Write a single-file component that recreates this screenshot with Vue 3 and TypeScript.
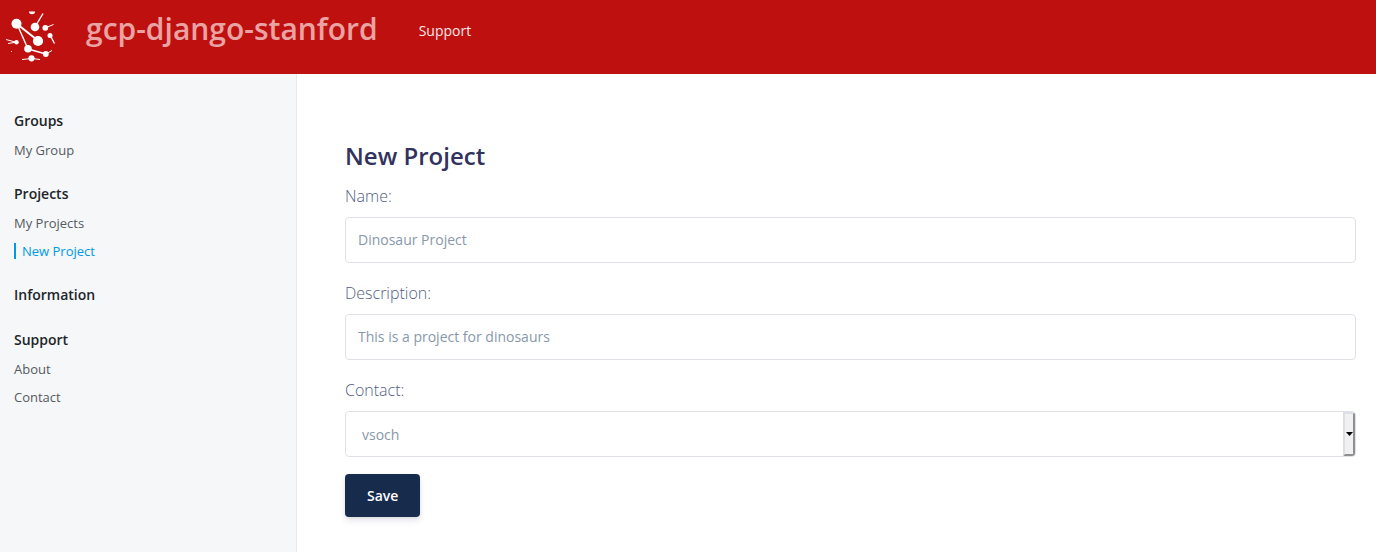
<script setup lang="ts">
import { ref } from 'vue'

interface NavItem {
  label: string
  active?: boolean
}

interface NavGroup {
  title: string
  items: NavItem[]
}

const groups: NavGroup[] = [
  { title: 'Groups', items: [{ label: 'My Group' }] },
  { title: 'Projects', items: [{ label: 'My Projects' }, { label: 'New Project', active: true }] },
  { title: 'Information', items: [] },
  { title: 'Support', items: [{ label: 'About' }, { label: 'Contact' }] },
]

const name = ref('')
const description = ref('')
const contact = ref('vsoch')
</script>

<template>
  <div class="page">
    <header class="topbar">
      <a class="logo" href="#" aria-label="Home">
        <svg width="56" height="56" viewBox="0 0 56 56" fill="#fff" stroke="#fff">
          <g fill="none" stroke-width="1.4">
            <path d="M12 16 33.500 33" stroke-width="2" />
            <path d="M12 16 23 41" />
            <path d="M23 41 41 46" />
            <path d="M30 19 38 5.500" />
            <path d="M40 20 48.500 16.500" stroke-width="1" />
            <path d="M45 27 49.500 35.500" />
            <path d="M12 34.500 1 31.500M12 34 3 35.500" stroke-width="1" />
            <path d="M41 46 47 42.500M17 51.500l10-1 8 1" stroke-width="1" />
          </g>
          <g stroke="none">
            <circle cx="11.500" cy="15.800" r="5" />
            <circle cx="30" cy="19" r="4.300" />
            <circle cx="33" cy="33" r="5.100" />
            <circle cx="23" cy="40.700" r="3.800" />
            <circle cx="40.300" cy="19.800" r="2.900" />
            <circle cx="45" cy="27.500" r="2.500" />
            <circle cx="11.500" cy="34.300" r="2.200" />
            <circle cx="40.800" cy="46" r="2.900" />
            <circle cx="26.500" cy="50.300" r="3.100" />
            <path d="M24 3.500h6a3 2.700 0 0 1-6 0z" />
            <circle cx="6.500" cy="43.500" r=".5" />
          </g>
        </svg>
      </a>
      <a class="brand" href="#">gcp-django-stanford</a>
      <a class="toplink" href="#">Support</a>
    </header>

    <div class="body">
      <nav class="sidebar" aria-label="Main">
        <section v-for="group in groups" :key="group.title" class="group">
          <a class="group-title" href="#">{{ group.title }}</a>
          <ul v-if="group.items.length" class="items">
            <li v-for="item in group.items" :key="item.label" class="item">
              <a class="item-link" :class="{ active: item.active }" href="#">{{ item.label }}</a>
            </li>
          </ul>
        </section>
      </nav>

      <main class="content">
        <h1 class="title">New Project</h1>
        <form @submit.prevent>
          <div class="field">
            <label class="label" for="name">Name:</label>
            <input id="name" v-model="name" class="control" type="text" placeholder="Dinosaur Project" />
          </div>
          <div class="field">
            <label class="label" for="description">Description:</label>
            <input id="description" v-model="description" class="control" type="text" placeholder="This is a project for dinosaurs" />
          </div>
          <div class="field">
            <label class="label" for="contact">Contact:</label>
            <div class="select-wrap">
              <select id="contact" v-model="contact" class="control select">
                <option value="vsoch">vsoch</option>
              </select>
              <span class="arrow" aria-hidden="true">
                <svg width="7" height="4" viewBox="0 0 7 4"><path d="M0 0h7L3.500 4z" fill="#000" /></svg>
              </span>
            </div>
          </div>
          <button class="save" type="submit">Save</button>
        </form>
      </main>
    </div>
  </div>
</template>

<style>
body {
  margin: 0;
  background: #fff;
}
</style>

<style scoped>
.page {
  min-height: 100vh;
  display: flex;
  flex-direction: column;
  font-family: "Open Sans", "Noto Sans", sans-serif;
  font-size: 14px;
}

.page * {
  box-sizing: border-box;
}

a {
  text-decoration: none;
}

.topbar {
  height: 74px;
  display: flex;
  align-items: flex-start;
  padding: 8px 5px;
  background: #bf1010;
}

.logo {
  display: flex;
}

.brand {
  margin-left: 25px;
  font-size: 30px;
  line-height: 42px;
  font-weight: 600;
  color: #e9a3a3;
}

.toplink {
  margin-left: 41px;
  line-height: 46px;
  color: #fae8e8;
}

.body {
  flex: 1;
  display: flex;
}

.sidebar {
  width: 297px;
  flex: none;
  padding: 32px 14px;
  background: #f5f7f9;
  border-right: 1px solid #e6e9f0;
}

.group {
  margin-bottom: 15px;
}

.group-title {
  display: block;
  line-height: 30px;
  font-weight: 600;
  color: #212529;
}

.items {
  margin: 0;
  padding: 0;
  list-style: none;
}

.item {
  height: 28px;
  display: flex;
  align-items: center;
}

.item-link {
  font-size: 13px;
  line-height: 16px;
  color: #555a60;
}

.active {
  padding-left: 6px;
  border-left: 2px solid #0099e5;
  color: #0099e5;
}

.content {
  flex: 1;
  min-width: 0;
  padding: 64px 20px 32px 48px;
}

.title {
  margin: 0 0 9px;
  font-size: 24px;
  line-height: 36px;
  font-weight: 600;
  color: #32325d;
}

.field {
  margin-bottom: 17px;
}

.label {
  display: block;
  margin-bottom: 7px;
  font-size: 16px;
  line-height: 27px;
  font-weight: 300;
  color: #525f7f;
}

.control {
  display: block;
  width: 100%;
  height: 46px;
  margin: 0;
  padding: 0 12px 2px;
  border: 1px solid #dee2e6;
  border-radius: 4px;
  background: #fff;
  font-family: inherit;
  font-size: 14px;
  color: #8898aa;
}

.control::placeholder {
  color: #8898aa;
  opacity: 1;
}

.select-wrap {
  position: relative;
}

.select {
  appearance: none;
  padding: 0 16px;
}

.arrow {
  position: absolute;
  top: 1px;
  right: 1px;
  bottom: 1px;
  width: 12px;
  display: flex;
  align-items: center;
  justify-content: center;
  border: 2px solid;
  border-color: #dedfe6 #8f8f8f #8f8f8f #dedfe6;
  border-radius: 0 3px 3px 0;
  background: #f0f0f0;
  pointer-events: none;
}

.save {
  height: 43px;
  padding: 0 22px;
  border: 0;
  border-radius: 4px;
  background: #172b4d;
  box-shadow: 0 4px 6px rgba(50, 50, 93, 0.11), 0 1px 3px rgba(0, 0, 0, 0.08);
  font-family: inherit;
  font-size: 14px;
  font-weight: 600;
  color: #fff;
}
</style>
